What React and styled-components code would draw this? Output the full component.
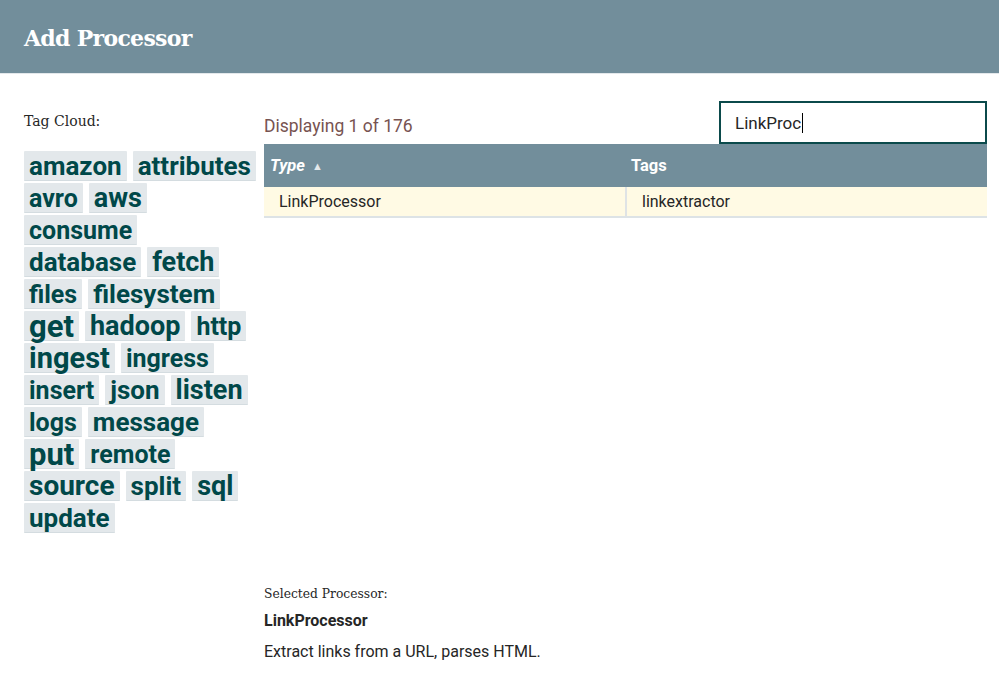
import React from "react";
import styled, { createGlobalStyle } from "styled-components";

const Global = createGlobalStyle`
  html, body { margin: 0; padding: 0; background: #fff; }
  body { font-family: Roboto, "Noto Sans", sans-serif; color: #262626; }
  * { box-sizing: border-box; }
`;

const Page = styled.div`
  width: 999px;
  height: 685px;
  overflow: hidden;
  display: flex;
  flex-direction: column;
`;

const Header = styled.header`
  height: 74px;
  background: #728e9b;
  border-bottom: 1px solid #e3e8eb;
  display: flex;
  align-items: center;
  padding: 3px 24px 0;
`;

const Title = styled.h1`
  margin: 0;
  font-family: "DejaVu Serif", "Liberation Serif", serif;
  font-weight: bold;
  font-size: 22px;
  letter-spacing: -0.7px;
  color: #fff;
`;

const Body = styled.div`
  flex: 1;
  display: flex;
  padding: 0 12px 0 24px;
  gap: 6px;
`;

const Side = styled.aside`
  width: 234px;
  flex: none;
  padding-top: 40px;
`;

const SerifLabel = styled.div`
  font-family: "DejaVu Serif", "Liberation Serif", serif;
  font-size: ${(p) => p.$size || 14}px;
  color: #262626;
  line-height: 1;
`;

const Cloud = styled.div`
  display: flex;
  flex-wrap: wrap;
  align-content: flex-start;
  margin-top: 23px;
  row-gap: 2px;
  column-gap: 6px;
`;

const Tag = styled.span`
  height: 30px;
  display: inline-flex;
  align-items: center;
  padding: 1px 5px 0;
  background: #e3e8eb;
  border-bottom: 1px solid #d4dce0;
  border-radius: 1px;
  color: #004849;
  font-family: Roboto, sans-serif;
  font-weight: 700;
  font-size: ${(p) => p.$size}px;
  line-height: 1;
  white-space: nowrap;
`;

const Main = styled.main`
  flex: 1;
  display: flex;
  flex-direction: column;
`;

const TopRow = styled.div`
  display: flex;
  align-items: flex-end;
  justify-content: space-between;
  padding-top: 27px;
`;

const Count = styled.div`
  font-size: 17.5px;
  color: #775351;
  padding-bottom: 8px;
`;

const Search = styled.div`
  width: 268px;
  height: 43px;
  border: 2px solid #0b4a4b;
  display: flex;
  align-items: center;
  padding-left: 14px;
  font-size: 17px;
  color: #262626;
`;

const Caret = styled.span`
  display: inline-block;
  width: 1px;
  height: 20px;
  background: #000;
  margin-left: 1px;
`;

const Grid = styled.div`
  height: 444px;
`;

const HeadRow = styled.div`
  display: grid;
  grid-template-columns: 361px 1fr;
  height: 43px;
  background: #728e9b;
  color: #fff;
  font-weight: 700;
  font-size: 16.5px;
`;

const HeadCell = styled.div`
  display: flex;
  align-items: center;
  padding-left: ${(p) => p.$pad}px;
  font-style: ${(p) => (p.$sorted ? "italic" : "normal")};
`;

const SortArrow = styled.span`
  font-style: normal;
  font-size: 11px;
  color: #e3e8eb;
  margin-left: 7px;
  margin-top: 1px;
`;

const DataRow = styled.div`
  display: grid;
  grid-template-columns: 361px 1fr;
  height: 31px;
  background: #fffae4;
  border-bottom: 2px solid #dde3e6;
  font-size: 16px;
  color: #262626;
`;

const Cell = styled.div`
  display: flex;
  align-items: center;
  padding-left: 15px;
  border-left: ${(p) => (p.$divider ? "2px solid #dfe3e5" : "none")};
`;

const Details = styled.section`
  display: flex;
  flex-direction: column;
`;

const ProcName = styled.div`
  font-weight: 700;
  font-size: 16px;
  margin-top: 11px;
  color: #262626;
`;

const ProcDesc = styled.div`
  font-size: 16px;
  margin-top: 12px;
  color: #262626;
`;

const tags = [
  ["amazon", 26],
  ["attributes", 26],
  ["avro", 25],
  ["aws", 27],
  ["consume", 25],
  ["database", 26],
  ["fetch", 27],
  ["files", 25],
  ["filesystem", 26],
  ["get", 31],
  ["hadoop", 27],
  ["http", 25],
  ["ingest", 29],
  ["ingress", 25],
  ["insert", 25],
  ["json", 26],
  ["listen", 27],
  ["logs", 25],
  ["message", 26],
  ["put", 31],
  ["remote", 25],
  ["source", 28],
  ["split", 26],
  ["sql", 27],
  ["update", 26],
];

export default function App() {
  return (
    <Page>
      <Global />
      <Header>
        <Title>Add Processor</Title>
      </Header>
      <Body>
        <Side>
          <SerifLabel>Tag Cloud:</SerifLabel>
          <Cloud>
            {tags.map(([t, s]) => (
              <Tag key={t} $size={s}>
                {t}
              </Tag>
            ))}
          </Cloud>
        </Side>
        <Main>
          <TopRow>
            <Count>Displaying 1 of 176</Count>
            <Search>
              LinkProc
              <Caret />
            </Search>
          </TopRow>
          <Grid>
            <HeadRow>
              <HeadCell $pad={6} $sorted>
                Type<SortArrow>▲</SortArrow>
              </HeadCell>
              <HeadCell $pad={6}>Tags</HeadCell>
            </HeadRow>
            <DataRow>
              <Cell>LinkProcessor</Cell>
              <Cell $divider>linkextractor</Cell>
            </DataRow>
          </Grid>
          <Details>
            <SerifLabel $size={12.3}>Selected Processor:</SerifLabel>
            <ProcName>LinkProcessor</ProcName>
            <ProcDesc>Extract links from a URL, parses HTML.</ProcDesc>
          </Details>
        </Main>
      </Body>
    </Page>
  );
}
